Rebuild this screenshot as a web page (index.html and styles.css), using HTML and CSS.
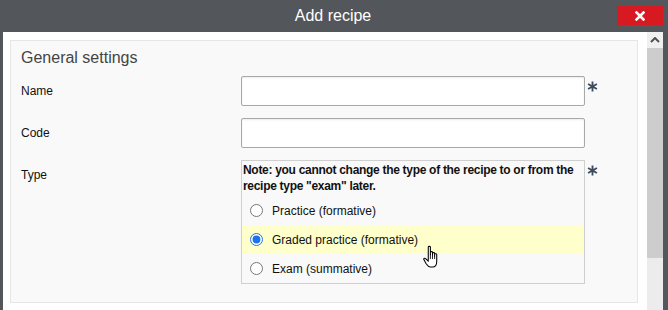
FILE: index.html
```html
<!DOCTYPE html>
<html lang="en">
<head>
  <meta charset="UTF-8">
  <meta name="viewport" content="width=device-width, initial-scale=1.0">
  <title>Add recipe</title>
  <link rel="stylesheet" href="styles.css">
</head>
<body>
  <div class="dialog">
    <div class="titlebar">
      <span></span>
      <h1 class="title">Add recipe</h1>
      <button class="close" type="button" aria-label="Close">
        <svg width="10" height="10" viewBox="0 0 10 10"><path d="M1.5 1.5 L8.5 8.5 M8.5 1.5 L1.5 8.5" stroke="#fff" stroke-width="2.6" stroke-linecap="square"/></svg>
      </button>
    </div>

    <div class="dialog-body">
      <div class="content">
        <div class="panel">
          <h2 class="panel-title">General settings</h2>

          <div class="form-row">
            <label class="form-label" for="recipeName">Name</label>
            <input class="text-input" id="recipeName" type="text">
            <span class="required">
              <svg width="11" height="11" viewBox="0 0 12 12"><path d="M6 0.5 V11.5 M1.2 3.2 L10.8 8.8 M10.8 3.2 L1.2 8.8" stroke="#3d4b5c" stroke-width="2"/></svg>
            </span>
          </div>

          <div class="form-row">
            <label class="form-label" for="recipeCode">Code</label>
            <input class="text-input" id="recipeCode" type="text">
          </div>

          <div class="form-row">
            <span class="form-label">Type</span>
            <div class="type-box">
              <p class="type-note">Note: you cannot change the type of the recipe to or from the recipe type "exam" later.</p>
              <label class="radio-row">
                <input type="radio" name="recipeType">
                <span>Practice (formative)</span>
              </label>
              <label class="radio-row radio-row--hover">
                <input type="radio" name="recipeType" checked>
                <span>Graded practice (formative)</span>
              </label>
              <label class="radio-row">
                <input type="radio" name="recipeType">
                <span>Exam (summative)</span>
              </label>
              <!-- mouse pointer -->
              <svg class="pointer" width="19" height="26" viewBox="0 0 18 24">
                <path d="M5 1.5 C5 0.7 7 0.7 7 1.5 V9 V6.5 C7 5.7 9 5.7 9 6.5 V9.5 V7.5 C9 6.7 11 6.7 11 7.5 V10 V8.5 C11 7.7 13 7.7 13 8.5 V15 C13 18 11.5 20.5 9 20.5 H7 C5 20.5 4 19 3 17.5 L0.8 13.5 C0.3 12.6 1.6 11.7 2.4 12.5 L5 15 Z" fill="#fff" stroke="#000" stroke-width="1" stroke-linejoin="round"/>
                <path d="M7 9 V13 M9 9.5 V13 M11 10 V13" stroke="#000" stroke-width="0.8"/>
              </svg>
            </div>
            <span class="required">
              <svg width="11" height="11" viewBox="0 0 12 12"><path d="M6 0.5 V11.5 M1.2 3.2 L10.8 8.8 M10.8 3.2 L1.2 8.8" stroke="#3d4b5c" stroke-width="2"/></svg>
            </span>
          </div>
        </div>
      </div>

      <div class="scrollbar">
        <div class="scroll-up">
          <svg width="10" height="6" viewBox="0 0 10 6"><path d="M1 5 L5 1 L9 5" fill="none" stroke="#505050" stroke-width="2"/></svg>
        </div>
        <div class="scroll-thumb"></div>
      </div>
    </div>
  </div>
</body>
</html>
```

FILE: styles.css
```css
html, body { margin: 0; height: 100%; }
body { font-family: "Liberation Sans", Arial, sans-serif; font-size: 12px; color: #111; background: #53565b; overflow: hidden; }

.dialog { height: 100%; display: flex; flex-direction: column; padding: 0 5px 0 3px; box-sizing: border-box; }

.titlebar {
  height: 32px;
  display: grid;
  grid-template-columns: 1fr auto 1fr;
  align-items: center;
}
.title { margin: 0; font-size: 16px; font-weight: normal; color: #fff; line-height: 32px; }
.close {
  justify-self: end;
  width: 46px;
  height: 19px;
  margin-top: -1px;
  padding: 0;
  border: none;
  background: #d71a22;
  display: flex;
  align-items: center;
  justify-content: center;
  cursor: pointer;
}

.dialog-body { flex: 1; display: flex; min-height: 0; }
.content { flex: 1; background: #fff; padding: 8px 9px 0 7px; }

.scrollbar { width: 16px; background: #ececec; display: flex; flex-direction: column; }
.scroll-up { height: 16px; background: #f0f0f0; display: flex; align-items: center; justify-content: center; }
.scroll-thumb { height: 210px; background: #cdcdcd; }

.panel {
  background: #f9f9f9;
  border: 1px solid #e6e6e6;
  padding: 7px 10px 18px;
}
.panel-title { margin: 0 0 8px; font-size: 16px; font-weight: normal; color: #444; line-height: 20px; }

.form-row { display: flex; align-items: flex-start; margin-bottom: 12px; }
.form-row:last-child { margin-bottom: 0; }
.form-label { width: 220px; flex: none; line-height: 30px; }

.text-input {
  width: 344px;
  height: 30px;
  box-sizing: border-box;
  border: 1px solid #a8a8a8;
  border-radius: 2px;
  background: #fff;
  box-shadow: inset 0 1px 2px rgba(0, 0, 0, 0.08);
  font: inherit;
  margin: 0;
}

.required { margin-left: 2px; margin-top: 5px; width: 11px; height: 11px; }
.required svg { display: block; }

.type-box {
  position: relative;
  width: 344px;
  box-sizing: border-box;
  border: 1px solid #cfcfcf;
}
.type-note { margin: 0 -2px 0 0; padding: 1px 0 2px 1px; font-weight: bold; line-height: 16px; letter-spacing: -0.3px; }

.radio-row { display: flex; align-items: center; height: 29px; padding-left: 7px; }
.radio-row input { width: 13px; height: 13px; margin: 0 9px 0 1px; accent-color: #1a73e8; }
.radio-row--hover { background: #ffffcb; }

.pointer { position: absolute; left: 181px; top: 84px; }
```
